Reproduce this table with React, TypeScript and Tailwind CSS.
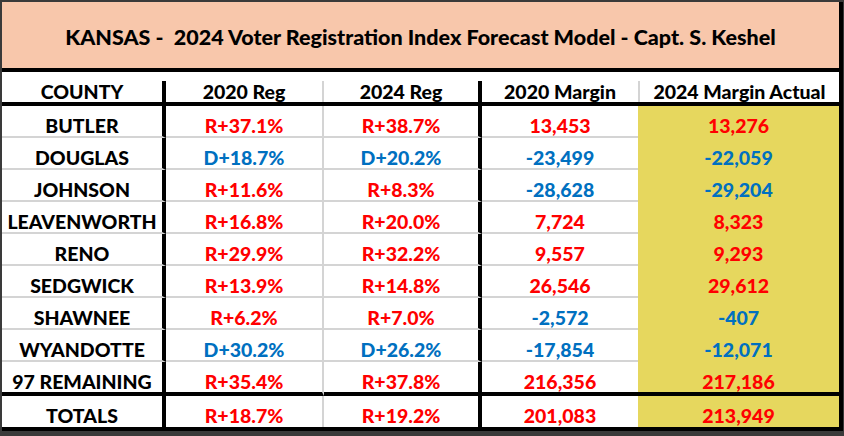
import React from 'react';

type Row = {
  county: string;
  reg20: string;
  reg24: string;
  m20: string;
  m24: string;
};

const rows: Row[] = [
  { county: 'BUTLER', reg20: 'R+37.1%', reg24: 'R+38.7%', m20: '13,453', m24: '13,276' },
  { county: 'DOUGLAS', reg20: 'D+18.7%', reg24: 'D+20.2%', m20: '-23,499', m24: '-22,059' },
  { county: 'JOHNSON', reg20: 'R+11.6%', reg24: 'R+8.3%', m20: '-28,628', m24: '-29,204' },
  { county: 'LEAVENWORTH', reg20: 'R+16.8%', reg24: 'R+20.0%', m20: '7,724', m24: '8,323' },
  { county: 'RENO', reg20: 'R+29.9%', reg24: 'R+32.2%', m20: '9,557', m24: '9,293' },
  { county: 'SEDGWICK', reg20: 'R+13.9%', reg24: 'R+14.8%', m20: '26,546', m24: '29,612' },
  { county: 'SHAWNEE', reg20: 'R+6.2%', reg24: 'R+7.0%', m20: '-2,572', m24: '-407' },
  { county: 'WYANDOTTE', reg20: 'D+30.2%', reg24: 'D+26.2%', m20: '-17,854', m24: '-12,071' },
  { county: '97 REMAINING', reg20: 'R+35.4%', reg24: 'R+37.8%', m20: '216,356', m24: '217,186' },
];

const totals: Row = { county: 'TOTALS', reg20: 'R+18.7%', reg24: 'R+19.2%', m20: '201,083', m24: '213,949' };

// red for R / positive margins, blue for D / negative margins
function tone(v: string) {
  return v.startsWith('D') || v.startsWith('-') ? 'text-[#0070c0]' : 'text-[#ff0000]';
}

function DataRow({ r, last }: { r: Row; last: boolean }) {
  const sep = last ? 'border-b-4 border-b-black' : 'border-b-2 border-b-[#d4d4d4]';
  const sepY = last ? 'border-b-4 border-b-black' : 'border-b-2 border-b-[#e6d75e]';
  const h = last ? 'h-[34px]' : 'h-8';
  return (
    <div className={`flex ${h} items-stretch`}>
      <div className={`flex w-[164px] items-center justify-center border-r-4 border-r-black pt-[9px] ${sep} text-black`}>
        {r.county}
      </div>
      <div className={`flex w-[158px] items-center justify-center border-r-2 border-r-[#d4d4d4] pt-[9px] ${sep} ${tone(r.reg20)}`}>
        {r.reg20}
      </div>
      <div className={`flex w-[158px] items-center justify-center border-r-4 border-r-black pt-[9px] ${sep} ${tone(r.reg24)}`}>
        {r.reg24}
      </div>
      <div className={`flex w-[156px] items-center justify-center pt-[9px] ${sep} ${tone(r.m20)}`}>{r.m20}</div>
      <div className={`flex w-[201px] items-center justify-center bg-[#e6d75e] pt-[9px] ${sepY} ${tone(r.m24)}`}>
        {r.m24}
      </div>
    </div>
  );
}

export default function App() {
  return (
    <div
      className="h-[436px] w-[844px] overflow-hidden bg-[#3a3a3a]"
      style={{ fontFamily: 'Lato, "Liberation Sans", sans-serif' }}
    >
      <div className="ml-[2px] mt-[2px] w-[841px] border-b-4 border-r-4 border-black bg-white text-[19.5px] font-black">
        <div className="flex h-[70px] items-center justify-center border-b-4 border-black bg-[#f8c7ab] pt-1 text-[21.5px] text-black">
          KANSAS -&nbsp; 2024 Voter Registration Index Forecast Model - Capt. S. Keshel
        </div>
        <div className="flex h-[34px] border-b-4 border-black pt-[9px] text-black">
          <div className="flex w-[164px] items-center justify-center border-r-4 border-black">COUNTY</div>
          <div className="flex w-[158px] items-center justify-center border-r-2 border-[#d4d4d4]">2020 Reg</div>
          <div className="flex w-[158px] items-center justify-center border-r-4 border-black">2024 Reg</div>
          <div className="flex w-[156px] items-center justify-center">2020 Margin</div>
          <div className="flex w-[201px] items-center justify-center border-l-2 border-[#d4d4d4]">
            2024 Margin Actual
          </div>
        </div>
        {rows.map((r, i) => (
          <DataRow key={r.county} r={r} last={i === rows.length - 1} />
        ))}
        <div className="flex h-[31px]">
          <div className="flex w-[164px] items-center justify-center border-r-4 border-black pt-[9px] text-black">
            {totals.county}
          </div>
          <div className="flex w-[158px] items-center justify-center border-r-2 border-[#d4d4d4] pt-[9px] text-[#ff0000]">
            {totals.reg20}
          </div>
          <div className="flex w-[158px] items-center justify-center border-r-4 border-black pt-[9px] text-[#ff0000]">
            {totals.reg24}
          </div>
          <div className="flex w-[156px] items-center justify-center pt-[9px] text-[#ff0000]">{totals.m20}</div>
          <div className="flex w-[201px] items-center justify-center bg-[#e6d75e] pt-[9px] text-[#ff0000]">
            {totals.m24}
          </div>
        </div>
      </div>
    </div>
  );
}
